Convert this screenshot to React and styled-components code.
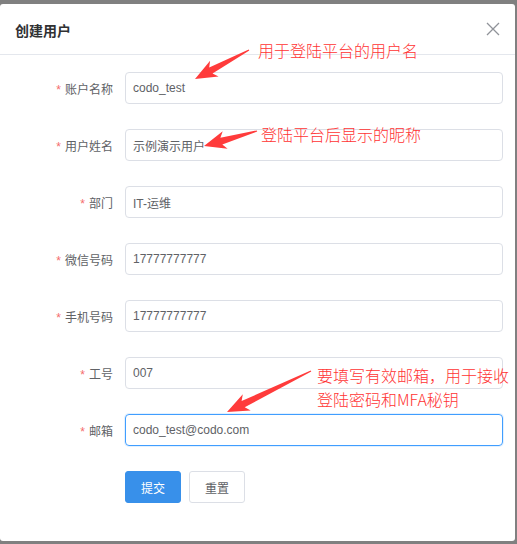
import React from "react";
import styled, { createGlobalStyle } from "styled-components";

const Global = createGlobalStyle`
  html, body { margin: 0; padding: 0; background: #808080; }
  body { font-family: "Liberation Sans", "Noto Sans CJK SC", sans-serif; }
  * { box-sizing: border-box; }
`;

const Page = styled.div`
  position: relative;
  width: 517px;
  height: 544px;
  padding-top: 4px;
  overflow: hidden;
`;

const Dialog = styled.div`
  width: 515px;
  height: 537px;
  background: #fff;
  border-radius: 3px;
  display: flex;
  flex-direction: column;
`;

const Header = styled.div`
  height: 51px;
  flex: none;
  display: flex;
  align-items: center;
  justify-content: space-between;
  padding: 0 15px 0 15px;
  border-bottom: 1px solid #e4e7ed;
`;

const Title = styled.div`
  font-size: 14px;
  font-weight: 700;
  color: #303133;
  padding-top: 1px;
`;

const Close = styled.button`
  border: 0;
  background: none;
  padding: 0;
  width: 14px;
  height: 14px;
  display: flex;
`;

const Form = styled.div`
  display: flex;
  flex-direction: column;
  gap: 25px;
  padding: 17px 12px 0 0;
`;

const Row = styled.div`
  display: flex;
  align-items: center;
  height: 32px;
`;

const Label = styled.div`
  width: 125px;
  flex: none;
  padding-right: 12px;
  text-align: right;
  font-size: 12px;
  color: #606266;
  font-family: "Noto Sans CJK SC", sans-serif;
`;

const Star = styled.span`
  color: #f56c6c;
  margin-right: 4px;
  font-family: "Liberation Sans", sans-serif;
`;

const Input = styled.div`
  width: 378px;
  height: 32px;
  border: 1px solid ${(p) => (p.$focus ? "#409eff" : "#dcdfe6")};
  border-radius: 4px;
  padding: 0 7px;
  display: flex;
  align-items: center;
  font-size: 12px;
  color: #606266;
  font-family: "Liberation Sans", "Noto Sans CJK SC", sans-serif;
  ${(p) => (p.$focus ? "box-shadow: 0 0 0 1px rgba(64,158,255,0.15);" : "")}
`;

const Buttons = styled.div`
  display: flex;
  gap: 8px;
  padding-left: 125px;
  margin-top: 25px;
`;

const Button = styled.button`
  width: 56px;
  height: 32px;
  border-radius: 3px;
  font-size: 12px;
  font-family: "Noto Sans CJK SC", sans-serif;
  border: 1px solid ${(p) => (p.$primary ? "#3890ea" : "#dcdfe6")};
  background: ${(p) => (p.$primary ? "#3890ea" : "#fff")};
  color: ${(p) => (p.$primary ? "#fff" : "#606266")};
  padding: 0;
`;

const Note = styled.div`
  position: absolute;
  color: #ff3333;
  font-size: 16px;
  line-height: 16px;
  font-family: "Noto Sans CJK SC", sans-serif;
  font-weight: 300;
  white-space: nowrap;
`;

const Overlay = styled.svg`
  position: absolute;
  left: 0;
  top: 0;
  pointer-events: none;
`;

function arrowPoints(tail, tip) {
  const dx = tip[0] - tail[0];
  const dy = tip[1] - tail[1];
  const L = Math.hypot(dx, dy);
  const ux = dx / L, uy = dy / L;
  const nx = -uy, ny = ux;
  const head = 20;
  const local = [
    [0, -0.6],
    [L - head + 2, -3.5],
    [L - head - 2, -9],
    [L, 0],
    [L - head - 2, 9],
    [L - head + 2, 3.5],
    [0, 0.6],
  ];
  return local
    .map(([a, b]) => `${(tail[0] + ux * a + nx * b).toFixed(1)},${(tail[1] + uy * a + ny * b).toFixed(1)}`)
    .join(" ");
}

const fields = [
  { label: "账户名称", value: "codo_test" },
  { label: "用户姓名", value: "示例演示用户" },
  { label: "部门", value: "IT-运维" },
  { label: "微信号码", value: "17777777777" },
  { label: "手机号码", value: "17777777777" },
  { label: "工号", value: "007" },
  { label: "邮箱", value: "codo_test@codo.com", focus: true },
];

export default function App() {
  return (
    <>
      <Global />
      <Page>
        <Dialog>
          <Header>
            <Title>创建用户</Title>
            <Close aria-label="close">
              <svg width="14" height="14" viewBox="0 0 14 14">
                <path d="M1 1 L13 13 M13 1 L1 13" stroke="#909399" strokeWidth="1.3" fill="none" />
              </svg>
            </Close>
          </Header>
          <Form>
            {fields.map((f) => (
              <Row key={f.label}>
                <Label>
                  <Star>*</Star>
                  {f.label}
                </Label>
                <Input $focus={f.focus}>{f.value}</Input>
              </Row>
            ))}
          </Form>
          <Buttons>
            <Button $primary>提交</Button>
            <Button>重置</Button>
          </Buttons>
        </Dialog>
        <Overlay width="517" height="544">
          <polygon points={arrowPoints([249, 50], [195, 79])} fill="#ff3b3b" />
          <polygon points={arrowPoints([257, 131], [204, 146])} fill="#ff3b3b" />
          <polygon points={arrowPoints([311, 371], [227, 412])} fill="#ff3b3b" />
        </Overlay>
        <Note style={{ left: 258, top: 42 }}>用于登陆平台的用户名</Note>
        <Note style={{ left: 261, top: 126 }}>登陆平台后显示的昵称</Note>
        <Note style={{ left: 317, top: 367 }}>要填写有效邮箱，用于接收</Note>
        <Note style={{ left: 317, top: 391 }}>登陆密码和MFA秘钥</Note>
      </Page>
    </>
  );
}
